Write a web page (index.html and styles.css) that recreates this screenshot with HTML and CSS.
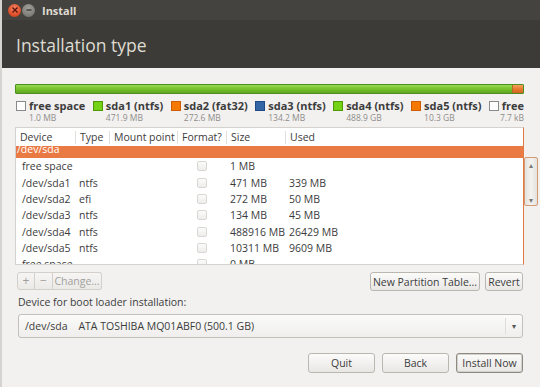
FILE: index.html
```html
<!DOCTYPE html>
<html lang="en">
<head>
    <meta charset="UTF-8">
    <title>Install</title>
    <link rel="stylesheet" href="styles.css">
</head>
<body>
    <div class="window">
        <!-- title bar -->
        <div class="titlebar">
            <span class="wbtn close">
                <svg width="8" height="8" viewBox="0 0 8 8"><path d="M1.5 1.5 L6.5 6.5 M6.5 1.5 L1.5 6.5" stroke="#5a1208" stroke-width="1.4"/></svg>
            </span>
            <span class="wbtn min">
                <svg width="8" height="8" viewBox="0 0 8 8"><path d="M1.5 4 H6.5" stroke="#3b3a36" stroke-width="1.4"/></svg>
            </span>
            <span class="wtitle">Install</span>
        </div>
        <div class="header">
            <h1>Installation type</h1>
        </div>

        <div class="content">
            <!-- partition bar -->
            <div class="partbar">
                <div class="seg seg-green"></div>
                <div class="seg seg-orange"></div>
            </div>

            <div class="legend">
                <div class="lg-item">
                    <span class="sw sw-free"></span>
                    <div class="lg-text"><div class="lg-name">free space</div><div class="lg-size">1.0 MB</div></div>
                </div>
                <div class="lg-item">
                    <span class="sw sw-green"></span>
                    <div class="lg-text"><div class="lg-name">sda1 (ntfs)</div><div class="lg-size">471.9 MB</div></div>
                </div>
                <div class="lg-item">
                    <span class="sw sw-orange"></span>
                    <div class="lg-text"><div class="lg-name">sda2 (fat32)</div><div class="lg-size">272.6 MB</div></div>
                </div>
                <div class="lg-item">
                    <span class="sw sw-blue"></span>
                    <div class="lg-text"><div class="lg-name">sda3 (ntfs)</div><div class="lg-size">134.2 MB</div></div>
                </div>
                <div class="lg-item">
                    <span class="sw sw-green"></span>
                    <div class="lg-text"><div class="lg-name">sda4 (ntfs)</div><div class="lg-size">488.9 GB</div></div>
                </div>
                <div class="lg-item">
                    <span class="sw sw-orange"></span>
                    <div class="lg-text"><div class="lg-name">sda5 (ntfs)</div><div class="lg-size">10.3 GB</div></div>
                </div>
                <div class="lg-item lg-last">
                    <span class="sw sw-free"></span>
                    <div class="lg-text"><div class="lg-name">free</div><div class="lg-size">7.7 kB</div></div>
                </div>
            </div>

            <!-- partition table -->
            <div class="ptable">
                <div class="prow phead">
                    <div class="cell">Device</div>
                    <div class="cell sep">Type</div>
                    <div class="cell sep">Mount point</div>
                    <div class="cell sep">Format?</div>
                    <div class="cell sep">Size</div>
                    <div class="cell sep">Used</div>
                </div>
                <div class="pbody">
                    <div class="plist">
                        <div class="prow disk"><div class="cell dev">/dev/sda</div></div>
                        <div class="prow">
                            <div class="cell dev">free space</div><div class="cell"></div><div class="cell"></div>
                            <div class="cell chk"><span class="cbox"></span></div>
                            <div class="cell">1 MB</div><div class="cell"></div>
                        </div>
                        <div class="prow">
                            <div class="cell dev">/dev/sda1</div><div class="cell">ntfs</div><div class="cell"></div>
                            <div class="cell chk"><span class="cbox"></span></div>
                            <div class="cell">471 MB</div><div class="cell">339 MB</div>
                        </div>
                        <div class="prow">
                            <div class="cell dev">/dev/sda2</div><div class="cell">efi</div><div class="cell"></div>
                            <div class="cell chk"><span class="cbox"></span></div>
                            <div class="cell">272 MB</div><div class="cell">50 MB</div>
                        </div>
                        <div class="prow">
                            <div class="cell dev">/dev/sda3</div><div class="cell">ntfs</div><div class="cell"></div>
                            <div class="cell chk"><span class="cbox"></span></div>
                            <div class="cell">134 MB</div><div class="cell">45 MB</div>
                        </div>
                        <div class="prow">
                            <div class="cell dev">/dev/sda4</div><div class="cell">ntfs</div><div class="cell"></div>
                            <div class="cell chk"><span class="cbox"></span></div>
                            <div class="cell">488916 MB</div><div class="cell">26429 MB</div>
                        </div>
                        <div class="prow">
                            <div class="cell dev">/dev/sda5</div><div class="cell">ntfs</div><div class="cell"></div>
                            <div class="cell chk"><span class="cbox"></span></div>
                            <div class="cell">10311 MB</div><div class="cell">9609 MB</div>
                        </div>
                        <div class="prow">
                            <div class="cell dev">free space</div><div class="cell"></div><div class="cell"></div>
                            <div class="cell chk"><span class="cbox"></span></div>
                            <div class="cell">0 MB</div><div class="cell"></div>
                        </div>
                    </div>
                </div>
                <div class="vscroll">
                    <span class="arr">&#9652;</span>
                    <span class="arr">&#9662;</span>
                </div>
            </div>

            <div class="tools">
                <div class="tgroup">
                    <button class="btn btn-off tb-sq">+</button>
                    <button class="btn btn-off tb-sq">&minus;</button>
                    <button class="btn btn-off tb-change">Change...</button>
                </div>
                <div class="tright">
                    <button class="btn tb-new">New Partition Table...</button>
                    <button class="btn tb-revert">Revert</button>
                </div>
            </div>

            <div class="boot-label">Device for boot loader installation:</div>
            <div class="combo">
                <span class="combo-text">/dev/sda&nbsp;&nbsp;&nbsp;&nbsp;ATA TOSHIBA MQ01ABF0 (500.1 GB)</span>
                <span class="combo-arrow">&#9662;</span>
            </div>

            <div class="actions">
                <button class="btn act">Quit</button>
                <button class="btn act">Back</button>
                <button class="btn act act-default">Install Now</button>
            </div>
        </div>
    </div>
</body>
</html>
```

FILE: styles.css
```css
* { margin: 0; padding: 0; box-sizing: border-box; }
body { width: 540px; height: 387px; overflow: hidden; background: #f2f1f0; font-family: "Open Sans", "DejaVu Sans", sans-serif; font-size: 10.5px; color: #3c3c3c; }

.window { height: 387px; display: flex; flex-direction: column; border-left: 2px solid #d6d4d0; }

/* dark header */
.titlebar { height: 20px; background: #44433f; display: flex; align-items: center; padding-left: 6px; }
.wbtn { width: 13px; height: 13px; border-radius: 50%; display: flex; align-items: center; justify-content: center; margin-right: 1px; }
.close { background: radial-gradient(circle at 50% 35%, #f58a6a, #df4f2a 60%, #b53a1c); }
.min { background: radial-gradient(circle at 50% 35%, #a3a29d, #7c7b76 70%); }
.wtitle { margin-left: 6px; color: #dfdbd2; font-weight: bold; font-size: 11px; }
.header { height: 48px; background: #3c3b37; padding: 13px 0 0 14px; }
.header h1 { font-weight: normal; font-size: 17.5px; color: #dfdbd2; }

.content { flex: 1; padding: 0 16px 0 13px; }

/* partition bar */
.partbar { margin-top: 16px; height: 10px; display: flex; border: 1px solid #4f8f1f; border-radius: 1px; }
.seg { height: 100%; }
.seg-green { flex: 1; background: linear-gradient(#9ad957, #79c42f 45%, #5ea61f); }
.seg-orange { width: 11px; background: linear-gradient(#f5a25e, #e9792f 50%, #d1641e); border-left: 1px solid #b56a25; }

.legend { display: flex; justify-content: space-between; height: 26px; margin-top: 5px; padding-left: 1px; }
.lg-item { display: flex; align-items: flex-start; }
.sw { width: 10px; height: 10px; margin: 2px 3px 0 0; border: 1px solid #7a7a7a; }
.sw-free { background: #fff; border-color: #8a8a8a; }
.sw-green { background: #73d216; border-color: #4e9a06; }
.sw-orange { background: #f57900; border-color: #ce5c00; }
.sw-blue { background: #3465a4; border-color: #204a87; }
.lg-name { font-weight: bold; font-size: 11px; line-height: 14px; }
.lg-size { font-size: 8.5px; color: #8f8d89; line-height: 10px; }
.lg-last { width: 35px; overflow: hidden; }
.lg-last .lg-size { text-align: right; margin-left: -14px; }

/* partition table */
.ptable { position: relative; margin-top: 2px; height: 138px; background: #fff; border: 1px solid #d5d2cd; border-right: 1px solid #e27a45; }
.prow { display: grid; grid-template-columns: 59px 34px 68px 49px 59px 1fr; height: 16.33px; align-items: center; white-space: nowrap; }
.cell { padding-left: 4px; line-height: 16px; overflow: hidden; }
.phead { height: 18px; position: relative; z-index: 1; background: #fff; }
.phead .sep { border-left: 1px solid #e2e0dc; line-height: 13px; }
.pbody { height: 118px; overflow: hidden; }
.plist { margin-top: -4px; }
.prow .dev { padding-left: 6px; }
.disk { display: block; background: #ea7a43; color: #fff; }
.disk .dev { padding-left: 1px; line-height: 14px; }
.chk { display: flex; justify-content: center; padding-left: 0; }
.cbox { width: 10px; height: 10px; border: 1px solid #d9d7d3; border-radius: 2px; background: linear-gradient(#fbfbfb, #eeedeb); }

.vscroll { position: absolute; right: -15px; top: 29px; width: 14px; height: 49px; border: 1px solid #d69a73; border-radius: 2px; background: linear-gradient(90deg, #e4e2de, #f4f3f1 50%, #e4e2de); display: flex; flex-direction: column; justify-content: space-between; align-items: center; padding: 2px 0 1px; }
.arr { font-size: 8px; line-height: 9px; color: #7c7a76; }

/* buttons */
.btn { font-family: inherit; font-size: 10.5px; color: #3c3c3c; background: linear-gradient(#fbfbfa, #e9e7e4); border: 1px solid #bab6b0; border-radius: 3px; height: 19px; }
.btn-off { color: #a19f9b; border-color: #d3d0cb; background: linear-gradient(#f6f5f4, #ebeae7); }

.tools { display: flex; justify-content: space-between; margin-top: 7px; padding-left: 2px; padding-right: 1px; }
.tgroup { display: flex; }
.tgroup .btn { height: 18px; border-radius: 0; }
.tgroup .btn + .btn { border-left: none; }
.tgroup .btn:first-child { border-radius: 3px 0 0 3px; }
.tgroup .btn:last-child { border-radius: 0 3px 3px 0; }
.tb-sq { width: 18px; font-size: 12px; line-height: 14px; }
.tb-change { width: 49px; }
.tright { display: flex; gap: 5px; }
.tb-new { width: 110px; }
.tb-revert { width: 38px; }

.boot-label { margin-top: 4px; padding-left: 3px; line-height: 14px; }
.combo { margin: 5px 1px 0 3px; height: 24px; border: 1px solid #c3bfb9; border-radius: 3px; background: linear-gradient(#fbfbfa, #efeeec); display: flex; align-items: center; justify-content: space-between; padding: 0 0 0 6px; }
.combo-arrow { width: 17px; border-left: 1px solid #e0ddd9; height: 16px; line-height: 16px; text-align: center; font-size: 8px; color: #555; }

.actions { display: flex; justify-content: flex-end; gap: 7px; margin-top: 15px; padding-right: 1px; }
.act { width: 67px; height: 20px; }
.act-default { border-color: #8d8983; box-shadow: inset 0 0 0 1px #d5d2cd; }
```
